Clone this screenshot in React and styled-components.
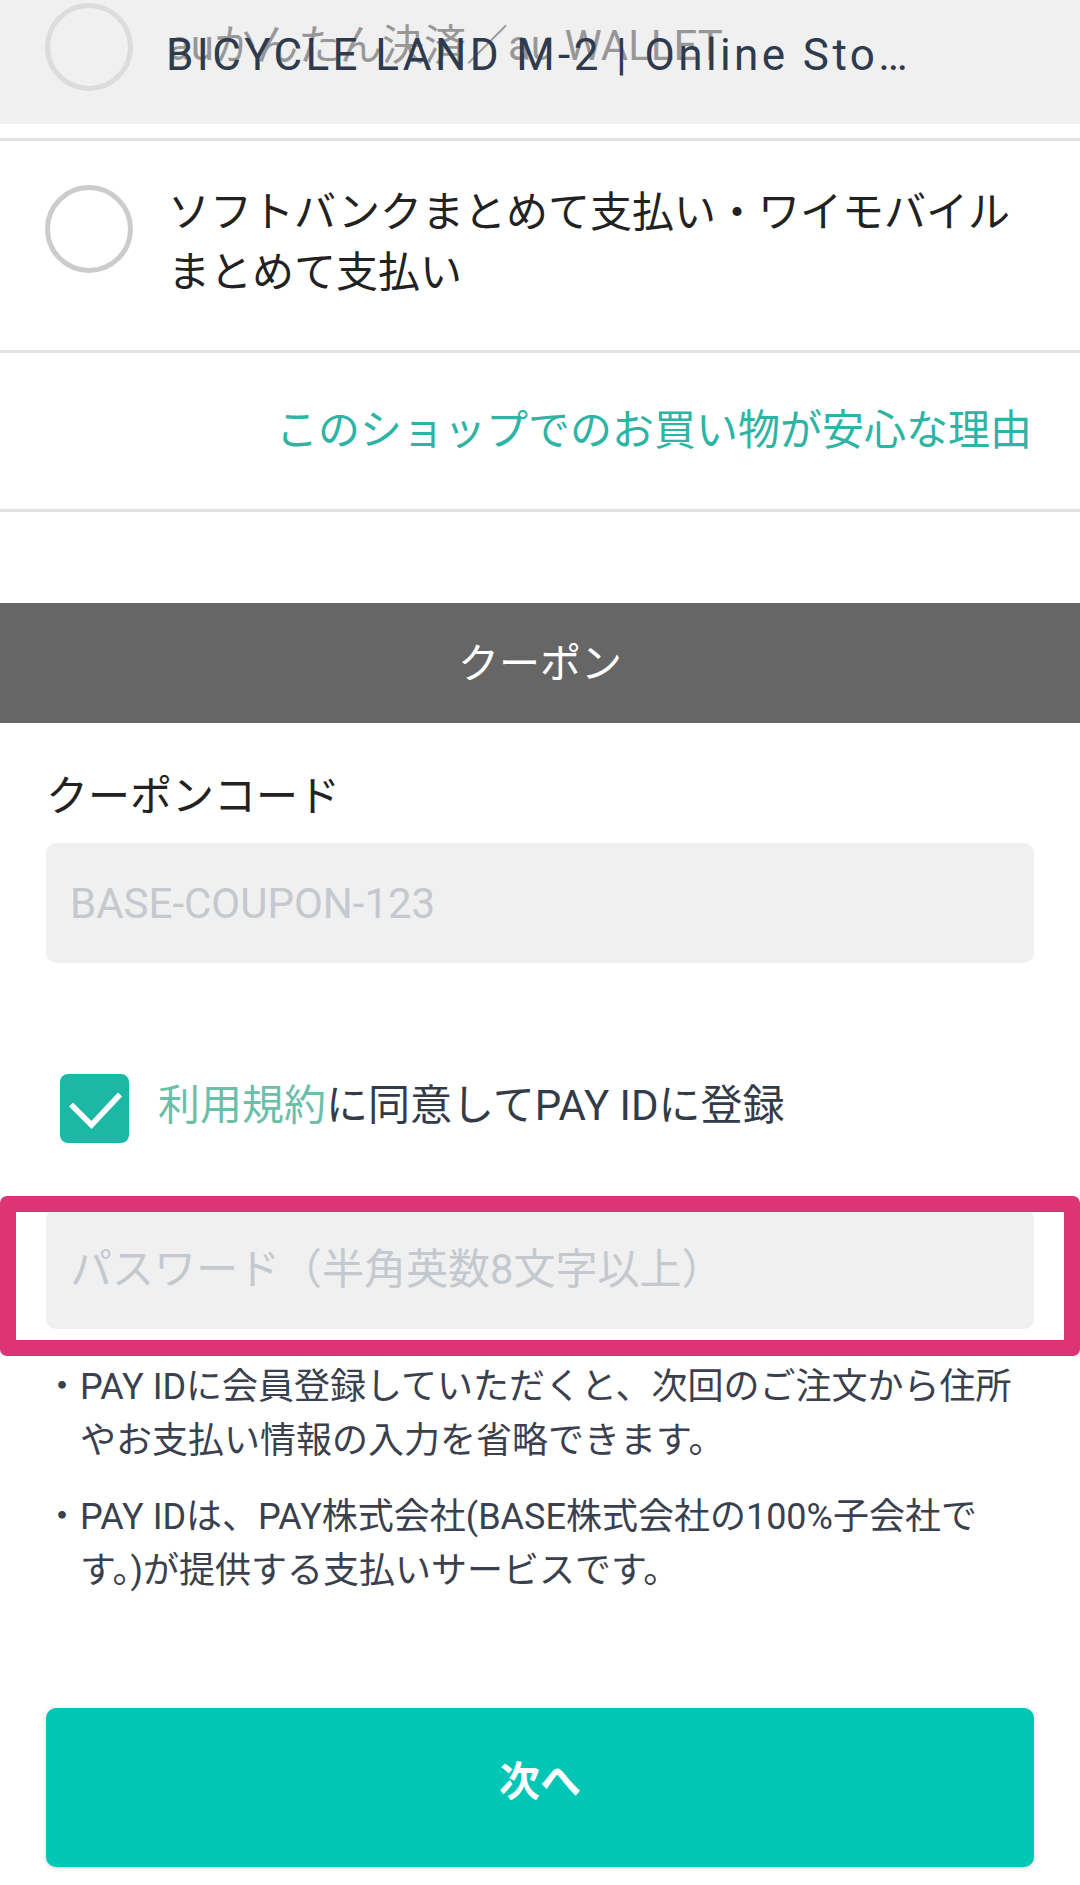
import styled, { createGlobalStyle } from "styled-components";

const GlobalStyle = createGlobalStyle`
    body {
        margin: 0;
        background: #fff;
        font-family: Roboto, "Noto Sans CJK JP", sans-serif;
    }
`;

const Page = styled.div`
    position: relative;
    width: 1080px;
    height: 1885px;
    overflow: hidden;
    background: #fff;
`;

const Toolbar = styled.div`
    position: absolute;
    top: 0;
    left: 0;
    right: 0;
    height: 124px;
    display: flex;
    align-items: center;
    padding: 0 0 14px 166px;
    box-sizing: border-box;
    background: rgba(230, 230, 230, 0.6);
    z-index: 2;
`;

const ToolbarTitle = styled.div`
    font-family: Roboto, sans-serif;
    font-size: 44px;
    letter-spacing: 3.4px;
    color: #2e3a4e;
    white-space: nowrap;
`;

const OptionList = styled.div`
    margin-top: -41px;
`;

const Option = styled.div`
    display: flex;
    align-items: flex-start;
    gap: 35px;
    padding: 42px 45px 47px;
    border-bottom: 3px solid #e2e2e2;
`;

const Radio = styled.span`
    flex: none;
    width: 88px;
    height: 88px;
    margin-top: 2px;
    border: 5px solid #cccccc;
    border-radius: 50%;
    box-sizing: border-box;
`;

const OptionLabel = styled.div`
    align-self: center;
    font-size: 42px;
    line-height: 60px;
    color: #222;
`;

const ReasonLink = styled.a`
    display: block;
    padding: 48px 48px;
    text-align: right;
    font-size: 42px;
    line-height: 60px;
    color: #2eb4a5;
    text-decoration: none;
    border-bottom: 3px solid #e2e2e2;
`;

const SectionHeader = styled.div`
    margin-top: 91px;
    height: 120px;
    padding-bottom: 7px;
    box-sizing: border-box;
    display: flex;
    align-items: center;
    justify-content: center;
    background: #666;
    color: #fff;
    font-size: 41px;
`;

const Body = styled.div`
    padding: 44px 46px 0;
`;

const FieldLabel = styled.div`
    font-size: 42px;
    line-height: 60px;
    color: #222;
`;

const Field = styled.div`
    position: relative;
    margin-top: ${(p) => p.$top}px;
`;

const Input = styled.input`
    display: block;
    width: 100%;
    height: 120px;
    box-sizing: border-box;
    padding: 0 24px;
    border: none;
    border-radius: 10px;
    background: #f0f0f0;
    font-family: Roboto, "Noto Sans CJK JP", sans-serif;
    font-size: 42px;
    color: #333;
    &::placeholder {
        color: #c4c8cf;
    }
    &:focus {
        outline: none;
    }
`;

const Highlight = styled.div`
    position: absolute;
    top: -13px;
    left: -46px;
    right: -46px;
    bottom: -27px;
    border: 16px solid #dc3474;
    border-radius: 7px;
    pointer-events: none;
`;

const AgreeRow = styled.label`
    display: flex;
    align-items: center;
    gap: 29px;
    margin-top: 111px;
    padding-left: 14px;
    font-size: 42px;
    line-height: 60px;
    color: #343b48;
`;

const AgreeText = styled.span`
    margin-top: -6px;
`;

const Terms = styled.span`
    color: #6bbfa8;
`;

const Notes = styled.div`
    margin-top: 31px;
    display: flex;
    flex-direction: column;
    gap: 22px;
`;

const Note = styled.div`
    display: flex;
    font-size: 36px;
    line-height: 54px;
    color: #3a404e;
`;

const Bullet = styled.span`
    flex: none;
    width: 36px;
    margin-left: -2px;
`;

const NextButton = styled.button`
    display: block;
    width: 100%;
    height: 159px;
    margin-top: 110px;
    border: none;
    border-radius: 10px;
    background: #00c6b6;
    box-shadow: 0 1px 4px rgba(0, 0, 0, 0.18);
    color: #fff;
    font-family: Roboto, "Noto Sans CJK JP", sans-serif;
    font-size: 41px;
    font-weight: 700;
    padding-bottom: 20px;
`;

const CheckBox = () => (
    <svg width="69" height="69" viewBox="0 0 69 69">
        <rect width="69" height="69" rx="8" fill="#1bb9a5" />
        <polyline
            points="11,30.5 31.5,51 60,20.5"
            fill="none"
            stroke="#fff"
            strokeWidth="5.5"
        />
    </svg>
);

const App = () => {
    return (
        <Page>
            <GlobalStyle />
            <Toolbar>
                <ToolbarTitle>BICYCLE LAND M-2 | Online Sto…</ToolbarTitle>
            </Toolbar>
            <OptionList>
                <Option>
                    <Radio />
                    <OptionLabel>auかんたん決済／au WALLET</OptionLabel>
                </Option>
                <Option>
                    <Radio />
                    <OptionLabel>
                        ソフトバンクまとめて支払い・ワイモバイル
                        <br />
                        まとめて支払い
                    </OptionLabel>
                </Option>
            </OptionList>
            <ReasonLink>このショップでのお買い物が安心な理由</ReasonLink>
            <SectionHeader>クーポン</SectionHeader>
            <Body>
                <FieldLabel>クーポンコード</FieldLabel>
                <Field $top={16}>
                    <Input placeholder="BASE-COUPON-123" />
                </Field>
                <AgreeRow>
                    <CheckBox />
                    <AgreeText>
                        <Terms>利用規約</Terms>に同意してPAY IDに登録
                    </AgreeText>
                </AgreeRow>
                <Field $top={66}>
                    <Input
                        type="password"
                        placeholder="パスワード（半角英数8文字以上）"
                    />
                    <Highlight />
                </Field>
                <Notes>
                    <Note>
                        <Bullet>・</Bullet>
                        <span>
                            PAY IDに会員登録していただくと、次回のご注文から住所
                            <br />
                            やお支払い情報の入力を省略できます。
                        </span>
                    </Note>
                    <Note>
                        <Bullet>・</Bullet>
                        <span>
                            PAY IDは、PAY株式会社(BASE株式会社の100%子会社で
                            <br />
                            す。)が提供する支払いサービスです。
                        </span>
                    </Note>
                </Notes>
                <NextButton>次へ</NextButton>
            </Body>
        </Page>
    );
};

export default App;
